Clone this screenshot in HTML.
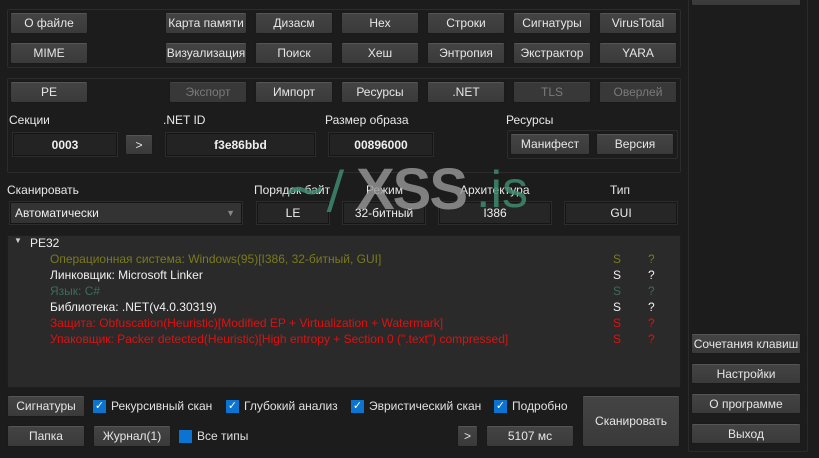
<!DOCTYPE html>
<html><head><meta charset="utf-8">
<style>
*{box-sizing:border-box;margin:0;padding:0}
body{width:819px;height:458px;background:#1c1c1c;font-family:"Liberation Sans","DejaVu Sans",sans-serif;font-size:12px;color:#e0e0e0;position:relative;overflow:hidden}
.a{position:absolute}
.b{position:absolute;height:22px;background:linear-gradient(#444,#3a3a3a);border:1px solid #1a1a1a;box-shadow:inset 0 1px 0 #555;border-radius:2px;color:#e6e6e6;text-align:center;line-height:20px;font-size:12px;white-space:nowrap;overflow:hidden}
.d{color:#7a7a7a;background:#383838;box-shadow:inset 0 1px 0 #444}
.g{position:absolute;border:1px solid #2c2c2c;border-radius:2px}
.f{position:absolute;background:#232323;border:1px solid #151515;box-shadow:0 0 0 1px #2c2c2c;color:#eee;text-align:center;line-height:22px;font-weight:bold;font-size:12px}
.f2{position:absolute;background:#262626;border:1px solid #151515;box-shadow:0 0 0 1px #2c2c2c;color:#eee;text-align:center;line-height:20px;font-size:12px}
.l{position:absolute;font-size:12px;color:#e8e8e8}
.cb{position:absolute;width:13px;height:13px;background:#0a74d0;color:#fff;font-size:11px;line-height:13px;text-align:center}
.t{position:absolute;font-size:12px;white-space:nowrap}
</style></head><body>
<!-- right panel -->
<div class="g" style="left:688px;top:-2px;width:120px;height:454px;border-color:#2a2a2a"></div>
<div class="b" style="left:691px;top:-12px;width:110px;height:18px"></div>
<div class="b" style="left:691px;top:333px;width:110px;height:21px">Сочетания клавиш</div>
<div class="b" style="left:691px;top:363px;width:110px;height:21px">Настройки</div>
<div class="b" style="left:691px;top:393px;width:110px;height:21px">О программе</div>
<div class="b" style="left:691px;top:423px;width:110px;height:21px">Выход</div>

<div class="g" style="left:7px;top:9px;width:674px;height:59px"></div>
<div class="b" style="left:10px;top:12px;width:78px">О файле</div>
<div class="b" style="left:165px;top:12px;width:82px">Карта памяти</div>
<div class="b" style="left:255px;top:12px;width:78px">Дизасм</div>
<div class="b" style="left:341px;top:12px;width:78px">Hex</div>
<div class="b" style="left:427px;top:12px;width:78px">Строки</div>
<div class="b" style="left:513px;top:12px;width:78px">Сигнатуры</div>
<div class="b" style="left:599px;top:12px;width:78px">VirusTotal</div>
<div class="b" style="left:10px;top:42px;width:78px">MIME</div>
<div class="b" style="left:165px;top:42px;width:82px">Визуализация</div>
<div class="b" style="left:255px;top:42px;width:78px">Поиск</div>
<div class="b" style="left:341px;top:42px;width:78px">Хеш</div>
<div class="b" style="left:427px;top:42px;width:78px">Энтропия</div>
<div class="b" style="left:513px;top:42px;width:78px">Экстрактор</div>
<div class="b" style="left:599px;top:42px;width:78px">YARA</div>

<div class="g" style="left:7px;top:78px;width:674px;height:95px"></div>
<div class="b" style="left:10px;top:81px;width:78px">PE</div>
<div class="b d" style="left:169px;top:81px;width:78px">Экспорт</div>
<div class="b" style="left:255px;top:81px;width:78px">Импорт</div>
<div class="b" style="left:341px;top:81px;width:78px">Ресурсы</div>
<div class="b" style="left:427px;top:81px;width:78px">.NET</div>
<div class="b d" style="left:513px;top:81px;width:78px">TLS</div>
<div class="b d" style="left:599px;top:81px;width:78px">Оверлей</div>
<div class="l" style="left:9px;top:113px">Секции</div>
<div class="l" style="left:163px;top:113px">.NET ID</div>
<div class="l" style="left:325px;top:113px">Размер образа</div>
<div class="l" style="left:506px;top:113px">Ресурсы</div>
<div class="f" style="left:13px;top:133px;width:104px;height:23px">0003</div>
<div class="b" style="left:125px;top:134px;width:28px;height:21px">&gt;</div>
<div class="f" style="left:166px;top:133px;width:149px;height:23px">f3e86bbd</div>
<div class="f" style="left:329px;top:133px;width:104px;height:23px">00896000</div>
<div class="g" style="left:507px;top:130px;width:171px;height:29px"></div>
<div class="b" style="left:510px;top:133px;width:80px;height:22px">Манифест</div>
<div class="b" style="left:596px;top:133px;width:78px;height:22px">Версия</div>

<div class="l" style="left:7px;top:183px">Сканировать</div>
<div class="f2" style="left:10px;top:202px;width:232px;height:22px;text-align:left;padding-left:4px;background:#333">Автоматически<span style="position:absolute;right:6px;top:0;color:#888;font-size:9px">▼</span></div>
<div class="l" style="left:254px;top:183px">Порядок байт</div>
<div class="l" style="left:366px;top:183px">Режим</div>
<div class="l" style="left:460px;top:183px">Архитектура</div>
<div class="l" style="left:610px;top:183px">Тип</div>
<div class="f2" style="left:257px;top:202px;width:72px;height:22px">LE</div>
<div class="f2" style="left:343px;top:202px;width:82px;height:22px">32-битный</div>
<div class="f2" style="left:439px;top:202px;width:112px;height:22px">I386</div>
<div class="f2" style="left:565px;top:202px;width:112px;height:22px">GUI</div>
<!-- watermark -->
<div class="a" style="left:283px;top:160px;font-size:52px;line-height:60px;color:#3f8a6e;opacity:.85;white-space:nowrap;font-family:'DejaVu Sans',sans-serif">~/</div>
<div class="a" style="left:356px;top:160px;font-size:58px;line-height:60px;font-weight:bold;color:#9a9a9a;opacity:.8;white-space:nowrap;letter-spacing:-2px">XSS</div>
<div class="a" style="left:476px;top:160px;font-size:52px;line-height:60px;color:#3f8a6e;opacity:.85;white-space:nowrap">.is</div>

<!-- tree -->
<div class="a" style="left:7px;top:235px;width:674px;height:153px;background:#2a2a2a;border:1px solid #1e1e1e"></div>
<div class="t" style="left:14px;top:236px;font-size:8px;color:#ccc">▼</div>
<div class="t" style="left:30px;top:236px;color:#eee">PE32</div>
<div class="t" style="left:50px;top:252px;color:#7a7a1e">Операционная система: Windows(95)[I386, 32-битный, GUI]</div>
<div class="t" style="left:50px;top:268px;color:#f0f0f0">Линковщик: Microsoft Linker</div>
<div class="t" style="left:50px;top:284px;color:#3c6e5a">Язык: C#</div>
<div class="t" style="left:50px;top:300px;color:#f0f0f0">Библиотека: .NET(v4.0.30319)</div>
<div class="t" style="left:50px;top:316px;color:#e01010">Защита: Obfuscation(Heuristic)[Modified EP + Virtualization + Watermark]</div>
<div class="t" style="left:50px;top:332px;color:#e01010">Упаковщик: Packer detected(Heuristic)[High entropy + Section 0 (".text") compressed]</div>
<div class="t" style="left:613px;top:252px;color:#7a7a1e">S</div><div class="t" style="left:648px;top:252px;color:#7a7a1e">?</div>
<div class="t" style="left:613px;top:268px;color:#f0f0f0">S</div><div class="t" style="left:648px;top:268px;color:#f0f0f0">?</div>
<div class="t" style="left:613px;top:284px;color:#3c6e5a">S</div><div class="t" style="left:648px;top:284px;color:#3c6e5a">?</div>
<div class="t" style="left:613px;top:300px;color:#f0f0f0">S</div><div class="t" style="left:648px;top:300px;color:#f0f0f0">?</div>
<div class="t" style="left:613px;top:316px;color:#e01010">S</div><div class="t" style="left:648px;top:316px;color:#e01010">?</div>
<div class="t" style="left:613px;top:332px;color:#e01010">S</div><div class="t" style="left:648px;top:332px;color:#e01010">?</div>

<!-- bottom -->
<div class="b" style="left:7px;top:395px;width:78px">Сигнатуры</div>
<div class="cb" style="left:93px;top:400px">✓</div><div class="t" style="left:111px;top:399px">Рекурсивный скан</div>
<div class="cb" style="left:226px;top:400px">✓</div><div class="t" style="left:244px;top:399px">Глубокий анализ</div>
<div class="cb" style="left:351px;top:400px">✓</div><div class="t" style="left:369px;top:399px">Эвристический скан</div>
<div class="cb" style="left:494px;top:400px">✓</div><div class="t" style="left:512px;top:399px">Подробно</div>
<div class="b" style="left:582px;top:395px;width:98px;height:52px;line-height:50px">Сканировать</div>
<div class="b" style="left:7px;top:425px;width:78px">Папка</div>
<div class="b" style="left:93px;top:425px;width:78px">Журнал(1)</div>
<div class="cb" style="left:179px;top:430px"></div><div class="t" style="left:197px;top:429px">Все типы</div>
<div class="b" style="left:457px;top:425px;width:21px">&gt;</div>
<div class="b" style="left:486px;top:425px;width:88px">5107 мс</div>
</body></html>
